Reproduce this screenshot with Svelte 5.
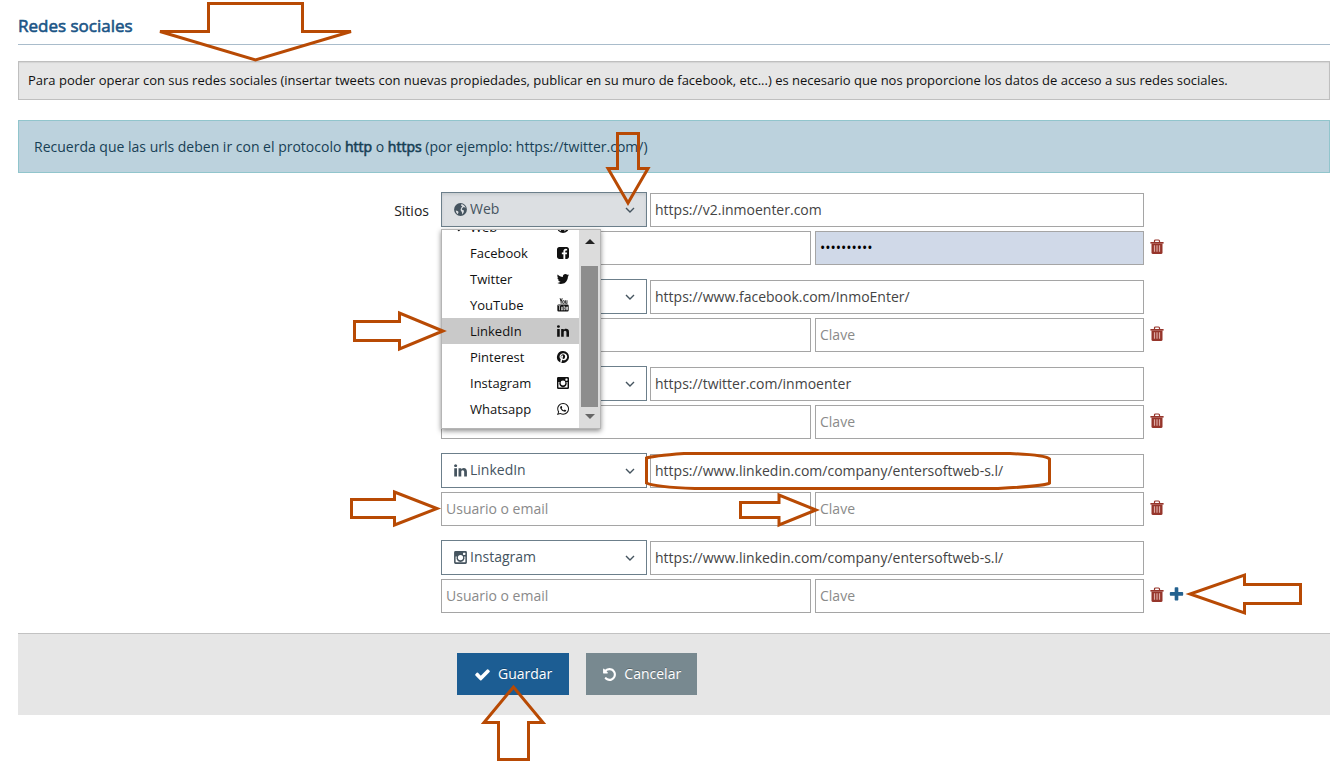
<script>
  const icons = {
    linkedin: 'M477 625v991h-330v-991h330zm21-306q1 73-50.5 122t-135.5 49h-2q-82 0-132-49t-50-122q0-74 51.5-122.5t134.5-48.5 133 48.5 51 122.5zm1166 729v568h-329v-530q0-105-40.5-164.5t-126.5-59.5q-63 0-105.5 34.5t-63.5 85.5q-11 30-11 81v553h-329q2-399 2-647t-1-296l-1-48h329v144h-2q20-32 41-56t56.5-52 87-43.5 114.5-15.5q171 0 275 113.5t104 332.5z',
    twitter: 'M1684 408q-67 98-162 167 1 14 1 42 0 130-38 259.5t-115.5 248.5-184.5 210.5-258 146-323 54.5q-271 0-496-145 35 4 78 4 225 0 401-138-105-2-188-64.5t-114-159.5q33 5 61 5 43 0 85-11-112-23-185.5-111.5t-73.5-205.5v-4q68 38 146 41-66-44-105-115t-39-154q0-88 44-163 121 149 294.5 238.5t371.5 99.5q-8-38-8-74 0-134 94.5-228.5t228.5-94.5q140 0 236 102 109-21 205-78-37 115-142 178 93-10 186-50z',
    facebook: 'M1376 128q119 0 203.5 84.5t84.5 203.5v960q0 119-84.5 203.5t-203.5 84.5h-188v-595h199l30-232h-229v-148q0-56 23.5-84t91.5-28l122-1v-207q-63-9-178-9-136 0-217.5 80t-81.5 226v171h-200v232h200v595h-532q-119 0-203.5-84.5t-84.5-203.5v-960q0-119 84.5-203.5t203.5-84.5h960z',
    whatsapp: 'M1113 974q13 0 97.5 44t89.5 53q2 5 2 15 0 33-17 76-16 39-71 65.5t-102 26.5q-57 0-190-62-98-45-170-118t-148-185q-72-107-71-194v-8q3-91 74-158 24-22 52-22 6 0 18 1.5t19 1.5q19 0 26.5 6.5t15.5 27.5q8 20 33 88t25 75q0 21-34.5 57.5t-34.5 46.5q0 7 5 15 34 73 102 137 56 53 151 101 12 7 22 7 15 0 54-48.5t52-48.5zm-203 530q127 0 243.5-50t200.5-134 134-200.5 50-243.5-50-243.5-134-200.5-200.5-134-243.5-50-243.5 50-200.5 134-134 200.5-50 243.5q0 203 120 368l-79 233 242-77q158 104 345 104zm0-1382q153 0 292.5 60t240.5 161 161 240.5 60 292.5-60 292.5-161 240.5-240.5 161-292.5 60q-195 0-365-94l-417 134 136-405q-108-178-108-389 0-153 60-292.5t161-240.5 240.5-161 292.5-60z',
    globe: 'M896 128a768 768 0 1 0 0 1536a768 768 0 1 0 0-1536zM1010 250L1180 310 1300 400 1440 540 1500 700 1420 690 1340 610 1230 640 1150 720 1060 800 1080 930 1200 960 1300 1030 1290 1180 1210 1330 1130 1480 1080 1340 1060 1180 960 1090 900 940 950 780 1010 640 1120 560 1030 480 960 420zM330 1010L470 1040 600 1110 660 1220 610 1340 590 1450 480 1360 380 1220z',
    instagram: 'M300 128h1192a172 172 0 0 1 172 172v1192a172 172 0 0 1-172 172H300a172 172 0 0 1-172-172V300a172 172 0 0 1 172-172zM310 780V1400q0 70 70 70H1410q70 0 70-70V780H1340a480 480 0 1 1-888 0zM896 590a310 310 0 1 0 0 620a310 310 0 1 0 0-620zM1250 320h180q50 0 50 50v180q0 50-50 50h-180q-50 0-50-50v-180q0-50 50-50z',
    pinterest: 'M896 128a768 768 0 1 1-227 1502q70-110 98-210l53-208q30 55 108 90 78 24 150 12 170-25 275-190 90-170 70-360-30-170-175-265-160-95-350-70-230 25-360 190-100 140-75 320 20 150 130 210 35 15 45-22l18-74q6-25-12-48-60-80-35-190 30-160 165-225 130-60 260-10 130 60 135 210 5 160-65 280-65 100-165 95-110-20-100-135l48-175q35-130-50-165-90-25-145 60-50 90-10 205L570 1320q-20 130-4 272A768 768 0 0 1 896 128z',
    youtube: 'M460 40h120l80 260 75-260h118L712 470v270H595V470zM960 280a150 150 0 0 1 150 150v170a150 150 0 0 1-300 0V430a150 150 0 0 1 150-150zm0 90a48 48 0 0 0-48 48v195a48 48 0 0 0 96 0V418a48 48 0 0 0-48-48zM1180 290h105v330q20 35 70-10V290h105v450h-105v-50q-160 120-175-30zM330 840H1462a160 160 0 0 1 160 160v560a160 160 0 0 1-160 160H330a160 160 0 0 1-160-160v-560a160 160 0 0 1 160-160zM280 950v70h110v540h80v-540h110v-70zM650 1110v380q20 130 150 40v30h70v-450h-70v370q-60 60-75 0v-370zM980 950v610h70v-30q150 80 160-80v-270q-20-150-160-80v-150zM1060 1200q60-60 75 0v250q-15 60-75 20zM1310 1220v240q20 110 110 110 110 0 110-130v-30h-75q0 90-40 90-35 0-35-60v-80h150v-150q-20-110-110-110t-110 120zM1390 1210q30-50 60 0v50h-60z',
    check: 'M1671 566q0 40-28 68l-724 724-136 136q-28 28-68 28t-68-28l-136-136-362-362q-28-28-28-68t28-68l136-136q28-28 68-28t68 28l294 295 656-657q28-28 68-28t68 28l136 136q28 28 28 68z',
    undo: 'M1664 896q0 156-61 298t-164 245-245 164-298 61q-172 0-327-72.5t-264-204.5q-7-10-6.5-22.5t8.5-20.5l137-138q10-9 25-9 16 2 23 12 73 95 179 147t225 52q104 0 198.5-40.5t163.5-109.5 109.5-163.5 40.5-198.5-40.5-198.5-109.5-163.5-163.5-109.5-198.5-40.5q-98 0-188 35.5t-160 101.5l137 138q31 30 14 69-17 40-59 40h-448q-26 0-45-19t-19-45v-448q0-42 40-59 39-17 69 14l130 129q107-101 244.5-156.5t284.5-55.5q156 0 298 61t245 164 164 245 61 298z',
    plus: 'M1600 736v192q0 40-28 68t-68 28h-416v416q0 40-28 68t-68 28h-192q-40 0-68-28t-28-68v-416h-416q-40 0-68-28t-28-68v-192q0-40 28-68t68-28h416v-416q0-40 28-68t68-28h192q40 0 68 28t28 68v416h416q40 0 68 28t28 68z'
  };

  const networks = [
    { name: 'Web', icon: 'globe' },
    { name: 'Facebook', icon: 'facebook' },
    { name: 'Twitter', icon: 'twitter' },
    { name: 'YouTube', icon: 'youtube' },
    { name: 'LinkedIn', icon: 'linkedin' },
    { name: 'Pinterest', icon: 'pinterest' },
    { name: 'Instagram', icon: 'instagram' },
    { name: 'Whatsapp', icon: 'whatsapp' }
  ];

  let sites = $state([
    { network: 'Web', url: 'https://v2.inmoenter.com', user: '', key: '0123456789' },
    { network: 'Facebook', url: 'https://www.facebook.com/InmoEnter/', user: '', key: '' },
    { network: 'Twitter', url: 'https://twitter.com/inmoenter', user: '', key: '' },
    { network: 'LinkedIn', url: 'https://www.linkedin.com/company/entersoftweb-s.l/', user: '', key: '' },
    { network: 'Instagram', url: 'https://www.linkedin.com/company/entersoftweb-s.l/', user: '', key: '' }
  ]);

  let open = $state(0);
  let active = $state('LinkedIn');

  const iconOf = (name) => networks.find((n) => n.name === name).icon;

  function scrollDown(node) {
    node.scrollTop = 16;
  }

  function choose(site, name) {
    site.network = name;
    open = -1;
  }

  function add() {
    sites.push({ network: 'Web', url: '', user: '', key: '' });
  }
</script>

{#snippet icon(name, cls = '')}
  <svg class="icon {cls}" viewBox="0 0 1792 1792" aria-hidden="true"><path fill-rule="evenodd" d={icons[name]} /></svg>
{/snippet}

<main>
  <h1>Redes sociales</h1>

  <p class="note">
    Para poder operar con sus redes sociales (insertar tweets con nuevas propiedades, publicar en su muro de facebook, etc...) es necesario que nos proporcione los datos de acceso a sus redes sociales.
  </p>

  <p class="hint">
    Recuerda que las urls deben ir con el protocolo <strong>http</strong> o <strong>https</strong> (por ejemplo: https://twitter.com/)
  </p>

  <form onsubmit={(e) => e.preventDefault()}>
    {#each sites as site, i}
      <div class="site">
        <div class="caption">
          {#if i === 0}<label for="network-0">Sitios</label>{/if}
        </div>
        <div class="fields">
          <div class="line">
            <div class="picker" class:open={open === i}>
              <select id="network-{i}" aria-label={i ? 'Sitio' : undefined} bind:value={site.network}>
                {#each networks as n}<option>{n.name}</option>{/each}
              </select>
              {@render icon(iconOf(site.network), 'lead')}
              <svg class="chevron" viewBox="0 0 10 6" aria-hidden="true"><path d="M1 1l4 4 4-4" /></svg>
              {#if open === i}
                <div class="menu">
                  <ul role="listbox" aria-label="Sitios" use:scrollDown>
                    {#each networks as n}
                      <li role="option" aria-selected={site.network === n.name}>
                        <button type="button" class:active={active === n.name} onmouseenter={() => (active = n.name)} onclick={() => choose(site, n.name)}>
                          <span class="tick">{#if site.network === n.name}{@render icon('check')}{/if}</span>
                          <span class="name">{n.name}</span>
                          {@render icon(n.icon)}
                        </button>
                      </li>
                    {/each}
                  </ul>
                  <div class="bar" aria-hidden="true">
                    <svg viewBox="0 0 10 5"><path d="M0 5l5-5 5 5z" fill="#222" /></svg>
                    <span class="thumb"></span>
                    <svg viewBox="0 0 10 5"><path d="M0 0l5 5 5-5z" fill="#666" /></svg>
                  </div>
                </div>
              {/if}
            </div>
            <input class="url" type="text" aria-label="Url" bind:value={site.url} />
          </div>
          <div class="line access">
            <input type="text" placeholder="Usuario o email" aria-label="Usuario o email" bind:value={site.user} />
            <input class:filled={site.key} type="password" placeholder="Clave" aria-label="Clave" autocomplete="off" bind:value={site.key} />
          </div>
        </div>
        <div class="actions">
          <button type="button" aria-label="Eliminar" onclick={() => sites.splice(i, 1)}>
            <svg class="trash" viewBox="0 0 14 16" aria-hidden="true">
              <path d="M4.5 3V2q0-1 1-1h3q1 0 1 1v1" fill="none" stroke="currentColor" stroke-width="1.2" />
              <path d="M.4 3h13.2v1.6H.4z" />
              <path d="M1.5 4.500h11V13.500q0 1.500-1.500 1.500H3q-1.500 0-1.500-1.500z" />
              <path d="M4.500 6.300v6.400M7 6.300v6.400M9.500 6.300v6.400" stroke="#dca9a3" stroke-width="1.200" />
            </svg>
          </button>
          {#if i === sites.length - 1}
            <button type="button" class="add" aria-label="Añadir" onclick={add}>{@render icon('plus')}</button>
          {/if}
        </div>
      </div>
    {/each}

    <footer>
      <div class="buttons">
        <button type="submit" class="save">{@render icon('check')}Guardar</button>
        <button type="button" class="cancel">{@render icon('undo')}Cancelar</button>
      </div>
    </footer>
  </form>

  <svg class="marks" width="1342" height="764" viewBox="0 0 1342 764" aria-hidden="true">
    <path d="M208.500 3.500H302.500V31.500H351L255.500 60 160 31.500H208.500z" />
    <path d="M617.500 133.500H638.500V168.500H648L628 203 608 168.500H617.500z" />
    <path d="M354.500 321.500H399.500V313L443 331 399.500 349V340.500H354.500z" />
    <path d="M351.500 499.500H394.500V492L437 508.500 394.500 525V517.500H351.500z" />
    <path d="M740.500 502.500H779V495L816 510 779 525V517.500H740.500z" />
    <path d="M1300.500 584.500H1244.500V575L1190 594 1244.500 613V603.500H1300.500z" />
    <path d="M498.500 759.500V722.500H484L513.500 687 543 722.500H528.500V759.500z" />
    <path d="M646.500 483V458Q652 456 684 453.500H1010Q1046 455 1049.500 459V483Q1046 486 998 488.500H695Q655 487 646.500 483z" />
  </svg>
</main>

<style>
  :global(body) {
    background: #fff;
  }

  main {
    position: relative;
    box-sizing: border-box;
    min-height: 100vh;
    padding: 14px 12px 0 18px;
    font: 14px/20px 'Open Sans', sans-serif;
    color: #222;
    overflow: hidden;
  }

  main * {
    box-sizing: border-box;
  }

  h1 {
    margin: 0 0 16px;
    padding: 0 0 6px;
    border-bottom: 1px solid #a9bccb;
    font-size: 17px;
    line-height: 24px;
    font-weight: 400;
    color: #1b5586;
    -webkit-text-stroke: 0.6px;
  }

  .note {
    margin: 0 0 20px;
    padding: 8px 9px 9px;
    border: 1px solid #bfbfbf;
    background: #e6e6e6;
    box-shadow: inset 0 1px 1px #d4d4d4;
    font-size: 13px;
    color: #111;
  }

  .hint {
    margin: 0 0 19px;
    padding: 16px 15px 15px;
    border: 1px solid #91c5cc;
    background: #bcd2dd;
    color: #173f55;
  }

  strong {
    font-weight: 400;
    -webkit-text-stroke: 0.6px;
  }

  .icon {
    width: 14px;
    height: 14px;
    fill: currentColor;
    flex: none;
  }

  form {
    display: flex;
    flex-direction: column;
    gap: 14px;
  }

  .site {
    display: grid;
    grid-template-columns: 423fr 703fr 186fr;
  }

  .caption {
    padding: 9px 12px 0 0;
    text-align: right;
  }

  .fields {
    display: grid;
    gap: 4px;
  }

  .line {
    display: flex;
    align-items: flex-end;
    gap: 3px;
  }

  .access {
    display: grid;
    grid-template-columns: 370fr 329fr;
    gap: 4px;
  }

  input {
    width: 100%;
    min-width: 0;
    height: 34px;
    padding: 0 4px 1px;
    border: 1px solid #a5a5a5;
    border-radius: 0;
    background: #fff;
    font: inherit;
    color: #444;
    outline: none;
  }

  input::placeholder {
    color: #8a8a8a;
    opacity: 1;
  }

  input.filled {
    background: #d0d9e8;
    color: #000;
  }

  .url {
    flex: 1;
  }

  .picker {
    position: relative;
    display: grid;
    align-items: center;
    flex: 0 0 206px;
    color: #45545f;
  }

  .picker > * {
    grid-area: 1 / 1;
  }

  select {
    appearance: none;
    width: 100%;
    height: 35px;
    padding: 0 28px 2px 28px;
    border: 1px solid #6c7f8b;
    border-radius: 0;
    background: #fff;
    font: inherit;
    color: inherit;
    outline: none;
  }

  .open select {
    background: #dcdfe2;
    box-shadow: inset 0 2px 3px #c8ccd0;
  }

  .picker .lead {
    width: 15px;
    height: 15px;
    margin: 0 0 1px 12px;
    pointer-events: none;
  }

  .chevron {
    width: 10px;
    height: 6px;
    margin-right: 12px;
    justify-self: end;
    fill: none;
    stroke: currentColor;
    stroke-width: 1.4;
    pointer-events: none;
  }

  .menu {
    position: absolute;
    top: 37px;
    left: 0;
    z-index: 2;
    display: grid;
    grid-template-columns: 1fr 21px;
    width: 160px;
    height: 200px;
    border: 1px solid #b5b5b5;
    background: #fff;
    box-shadow: 0 2px 5px rgba(0, 0, 0, 0.45);
  }

  ul {
    height: 198px;
    margin: 0;
    padding: 0 0 8px;
    list-style: none;
    overflow-y: scroll;
    scrollbar-width: none;
  }

  li button {
    display: grid;
    grid-template-columns: 12px 1fr 14px;
    gap: 4px;
    align-items: center;
    width: 100%;
    height: 26px;
    padding: 0 9px 0 12px;
    border: 0;
    background: none;
    font: inherit;
    font-size: 13px;
    text-align: left;
    color: #111;
  }

  .tick {
    display: flex;
  }

  .tick .icon {
    width: 12px;
    height: 12px;
  }

  button.active {
    background: #c9c9c9;
  }

  .bar {
    display: flex;
    flex-direction: column;
    align-items: center;
    padding: 9px 0;
    background: #dcdcdc;
  }

  .bar svg {
    width: 10px;
    height: 5px;
  }

  .thumb {
    flex: 1;
    width: 17px;
    margin: 22px 0 7px;
    background: #8d8d8d;
  }

  .actions {
    display: flex;
    align-items: flex-end;
    gap: 4px;
    padding: 0 0 10px 6px;
  }

  .actions button {
    display: flex;
    padding: 0;
    border: 0;
    background: none;
    color: #96352b;
  }

  .trash {
    width: 14px;
    height: 16px;
    fill: currentColor;
  }

  .actions .add {
    color: #23618f;
  }

  .add .icon {
    width: 17px;
    height: 17px;
  }

  footer {
    display: grid;
    grid-template-columns: 439fr 873fr;
    margin-top: 6px;
    padding: 19px 0 20px;
    border-top: 1px solid #c2c2c2;
    background: #e6e6e6;
  }

  .buttons {
    grid-column: 2;
    display: flex;
    gap: 17px;
  }

  .buttons button {
    display: flex;
    align-items: center;
    gap: 7px;
    height: 42px;
    padding: 0 17px;
    border: 0;
    font: inherit;
    color: #fff;
    text-shadow: 0 -1px 0 rgba(0, 0, 0, 0.25);
  }

  .buttons .save {
    background: #1c5d93;
  }

  .buttons .cancel {
    padding: 0 16px;
    background: #788990;
  }

  .buttons .icon {
    width: 15px;
    height: 15px;
  }

  .buttons .save .icon {
    width: 17px;
    height: 17px;
  }

  .marks {
    position: absolute;
    top: 0;
    left: 0;
    z-index: 3;
    fill: none;
    stroke: #b84a04;
    stroke-width: 3;
    pointer-events: none;
  }
</style>
